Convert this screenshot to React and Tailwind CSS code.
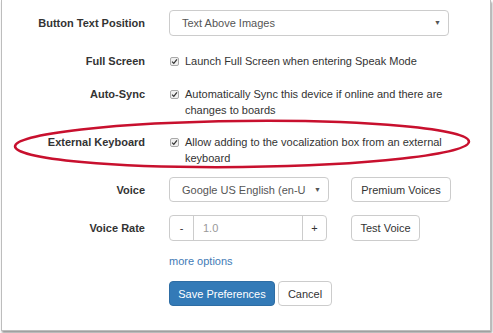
import React from 'react';

const Check = () => (
  <span className="mt-[4px] mr-[6px] ml-[1px] flex h-[9px] w-[9px] shrink-0 items-center justify-center rounded-[2px] border border-[#a9a9a9] bg-[#f0f0f0]">
    <svg width="7" height="7" viewBox="0 0 8 8">
      <path d="M1.2 4.2 L3.2 6.2 L6.8 1.6" fill="none" stroke="#333" strokeWidth="1.4" />
    </svg>
  </span>
);

const Row = ({ label, className = '', children }) => (
  <div className={`flex ${className}`}>
    <div className="w-[143px] shrink-0 text-right font-bold text-[#333]">{label}</div>
    <div className="ml-[24px] flex-1">{children}</div>
  </div>
);

const CheckRow = ({ label, className, children }) => (
  <Row label={label} className={className}>
    <div className="flex">
      <Check />
      <span className="text-[#333]">{children}</span>
    </div>
  </Row>
);

export default function App() {
  return (
    <div className="relative h-[333px] w-[493px] bg-white font-['Liberation_Sans',Arial,sans-serif] text-[11px] leading-[16px]">
      <div className="ml-[1px] h-[331px] w-[490px] border-x border-b border-[#bdbdbd] bg-white pt-[10px] shadow-[1px_2px_2px_rgba(0,0,0,0.4)]">
        <Row label="Button Text Position" className="items-center">
          <div className="flex h-[26px] w-[280px] items-center justify-between rounded-[4px] border border-[#ccc] pr-[7px] pl-[12px] text-[#555]">
            <span>Text Above Images</span>
            <span className="text-[7px]">▼</span>
          </div>
        </Row>

        <CheckRow label="Full Screen" className="mt-[17px]">
          Launch Full Screen when entering Speak Mode
        </CheckRow>

        <CheckRow label="Auto-Sync" className="mt-[17px]">
          Automatically Sync this device if online and there are
          <br />
          changes to boards
        </CheckRow>

        <CheckRow label="External Keyboard" className="mt-[16px]">
          Allow adding to the vocalization box from an external
          <br />
          keyboard
        </CheckRow>

        <Row label="Voice" className="mt-[11px] items-center">
          <div className="flex items-center">
            <div className="flex h-[25px] w-[160px] items-center justify-between rounded-[4px] border border-[#ccc] pr-[7px] pl-[12px] text-[#555]">
              <span>Google US English (en-U</span>
              <span className="text-[7px]">▼</span>
            </div>
            <div className="ml-[22px] flex h-[25px] w-[100px] items-center justify-center rounded-[4px] border border-[#ccc] text-[#333]">
              Premium Voices
            </div>
          </div>
        </Row>

        <Row label="Voice Rate" className="mt-[13px] items-center">
          <div className="flex items-center">
            <div className="flex h-[26px] w-[158px] rounded-[4px] border border-[#ccc]">
              <div className="flex w-[24px] items-center justify-center border-r border-[#ccc] text-[#333]">-</div>
              <div className="flex flex-1 items-center pl-[9px] text-[#999]">1.0</div>
              <div className="flex w-[24px] items-center justify-center border-l border-[#ccc] text-[#333]">+</div>
            </div>
            <div className="ml-[24px] flex h-[26px] w-[69px] items-center justify-center rounded-[4px] border border-[#ccc] text-[#333]">
              Test Voice
            </div>
          </div>
        </Row>

        <div className="mt-[12px] ml-[167px] text-[#3f7bb6]">more options</div>

        <div className="mt-[12px] ml-[167px] flex">
          <div className="flex h-[25px] w-[106px] items-center justify-center rounded-[4px] border border-[#2e6da4] bg-[#337ab7] text-white">
            Save Preferences
          </div>
          <div className="ml-[3px] flex h-[25px] w-[54px] items-center justify-center rounded-[4px] border border-[#ccc] text-[#333]">
            Cancel
          </div>
        </div>
      </div>

      <svg className="pointer-events-none absolute top-0 left-0" width="493" height="333">
        <ellipse cx="242" cy="144" rx="227" ry="23" fill="none" stroke="#c8102e" strokeWidth="2.5" transform="rotate(-0.6 242 144)" />
      </svg>
    </div>
  );
}
